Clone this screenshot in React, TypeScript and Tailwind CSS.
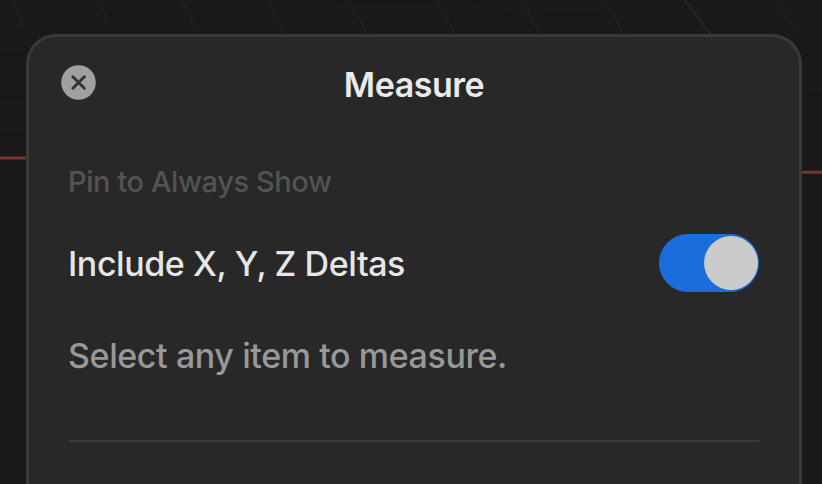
import { useState } from 'react'

function CloseIcon() {
  return (
    <svg viewBox="0 0 35 35" className="block size-[35px]" aria-hidden="true">
      <circle cx="17.5" cy="17.5" r="17.3" fill="#a0a0a0" />
      <path d="M11.8 11.8 23.4 23.2M23.4 11.8 11.8 23.2" stroke="#333" strokeWidth="3" strokeLinecap="round" />
    </svg>
  )
}

// Viewport floor grid with the red X axis
function ViewportGrid() {
  return (
    <svg viewBox="0 0 822 484" className="absolute inset-0 -z-10 h-full w-full" fill="none" aria-hidden="true">
      <path
        d="M0 4 260 5 560 9 822 14M0 27 250 28 M0 50H27M0 76H27M0 102H27M0 130H27M0 217H27M0 313H27M0 348H27M0 380H27M0 420H27M0 455H27M802 65H822M802 90H822M802 119H822M802 143H822M802 231H822M802 265H822M802 300H822M802 340H822M802 385H822M802 432H822"
        stroke="#1c1c1c"
        strokeWidth="1.5"
      />
      <path d="M12 0 24 26M98 0 109 24M182 0 194 26M267 0 286 34M348 0 368 34M435 0 455 34M522 0 540 34M604 0 624 34" stroke="#1e1e1e" strokeWidth="2" />
      <path d="M685 0 711 35" stroke="#272727" strokeWidth="2" />
      <path d="M775 0 800 34" stroke="#1d1d1d" strokeWidth="2" />
      <path d="M0 158H28M800 172.3H822" stroke="#793332" strokeWidth="3" />
    </svg>
  )
}

interface ToggleProps {
  label: string
  checked: boolean
  onChange: (value: boolean) => void
}

function Toggle({ label, checked, onChange }: ToggleProps) {
  return (
    <button
      role="switch"
      aria-label={label}
      aria-checked={checked}
      onClick={() => onChange(!checked)}
      className={`flex h-[58px] w-[100px] items-center rounded-full px-px ${
        checked ? 'justify-end bg-[#1b6ddb]' : 'justify-start bg-[#484848]'
      }`}
    >
      <span className="size-[54px] rounded-full bg-[#cbcbcb]" />
    </button>
  )
}

export default function App() {
  const [includeDeltas, setIncludeDeltas] = useState(true)

  return (
    <div className="relative isolate flex h-[484px] w-[822px] overflow-hidden bg-[#191919] pt-[34px] pl-[26px] font-['Inter',sans-serif]">
      <ViewportGrid />
      <section className="flex h-[500px] w-[776px] shrink-0 flex-col rounded-t-[30px] border-[3px] border-b-0 border-[#3a3a3a] bg-[#282828] px-10 pt-6">
        <header className="-mx-2 grid h-9 grid-cols-[35px_1fr_35px] items-center">
          <button aria-label="Close">
            <CloseIcon />
          </button>
          <h1 className="pt-1.5 text-center text-[34px] leading-9 font-semibold tracking-[-0.45px] text-[#eaeaea]">Measure</h1>
        </header>

        <p className="-ml-px mt-[67px] text-[29px] leading-9 font-medium tracking-[-0.42px] text-[#535353]">Pin to Always Show</p>

        <div className="mt-[34px] flex items-center justify-between">
          <span className="-ml-px pt-0.5 text-[34px] leading-10 font-[450] tracking-[-0.42px] text-[#e6e6e6]">Include X, Y, Z Deltas</span>
          <Toggle label="Include X, Y, Z Deltas" checked={includeDeltas} onChange={setIncludeDeltas} />
        </div>

        <p className="-ml-px mt-[44px] text-[34px] leading-10 font-[450] tracking-[-0.4px] text-[#989898]">Select any item to measure.</p>

        <hr className="mt-[64px] border-t-2 border-[#3c3c3c]" />
      </section>
    </div>
  )
}
